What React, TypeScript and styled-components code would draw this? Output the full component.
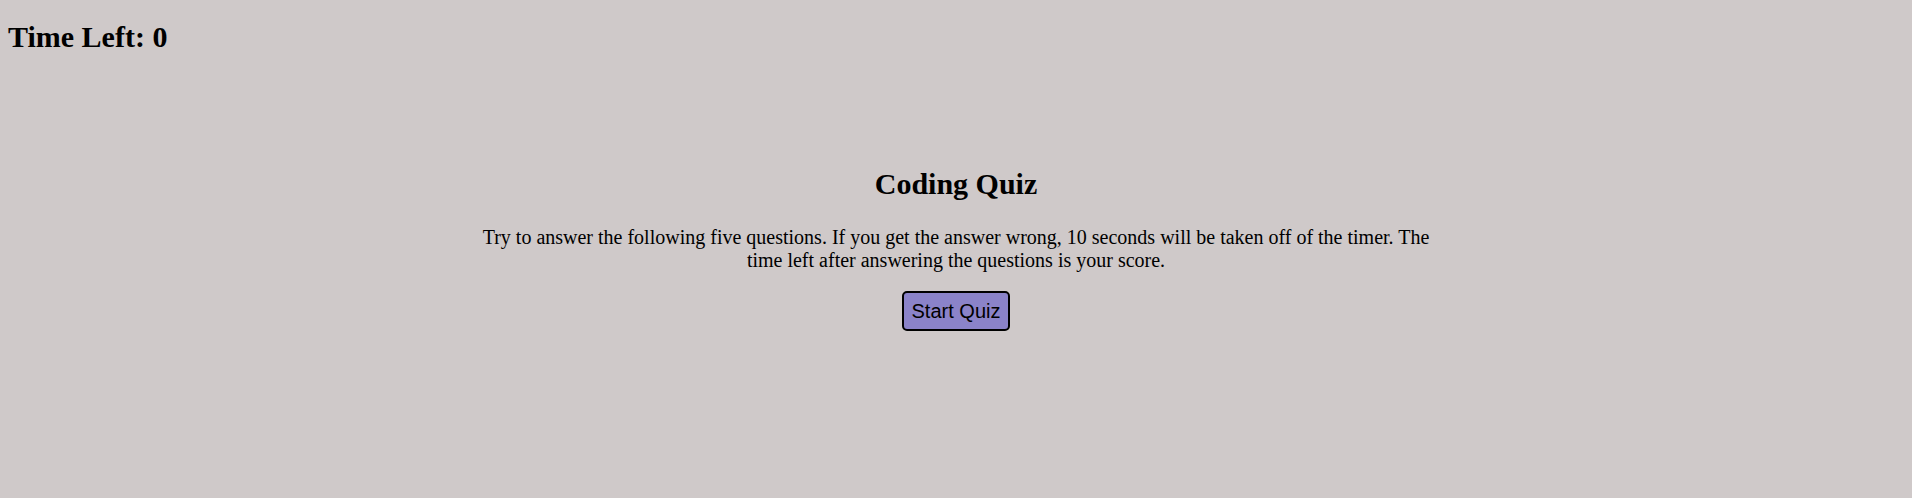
import React from "react";
import styled, { createGlobalStyle } from "styled-components";

const GlobalStyle = createGlobalStyle`
  html, body {
    margin: 0;
    padding: 0;
    background: #cfc9c9;
    font-family: "Liberation Serif", "Times New Roman", serif;
    color: #000;
  }
`;

const Page = styled.div`
  min-height: 498px;
  display: flex;
  flex-direction: column;
`;

const Header = styled.header`
  padding: 20px 8px 0;
`;

const Timer = styled.h1`
  margin: 0;
  font-size: 30px;
  font-weight: bold;
`;

const Main = styled.main`
  width: 50%;
  margin: 113px auto 0;
  display: flex;
  flex-direction: column;
  align-items: center;
  text-align: center;
`;

const Title = styled.h1`
  margin: 0;
  font-size: 30px;
  font-weight: bold;
`;

const Intro = styled.p`
  margin: 25px 0 0;
  font-size: 20px;
  line-height: 23px;
`;

const StartButton = styled.button`
  margin-top: 19px;
  height: 40px;
  padding: 0 8px;
  font-family: "Liberation Sans", Arial, sans-serif;
  font-size: 20px;
  color: #000;
  background: #8b83c9;
  border: 2px solid #000;
  border-radius: 5px;
  cursor: pointer;
`;

export default function App() {
  return (
    <>
      <GlobalStyle />
      <Page>
        <Header>
          <Timer>Time Left: 0</Timer>
        </Header>
        <Main>
          <Title>Coding Quiz</Title>
          <Intro>
            Try to answer the following five questions. If you get the answer
            wrong, 10 seconds will be taken off of the timer. The time left
            after answering the questions is your score.
          </Intro>
          <StartButton>Start Quiz</StartButton>
        </Main>
      </Page>
    </>
  );
}
